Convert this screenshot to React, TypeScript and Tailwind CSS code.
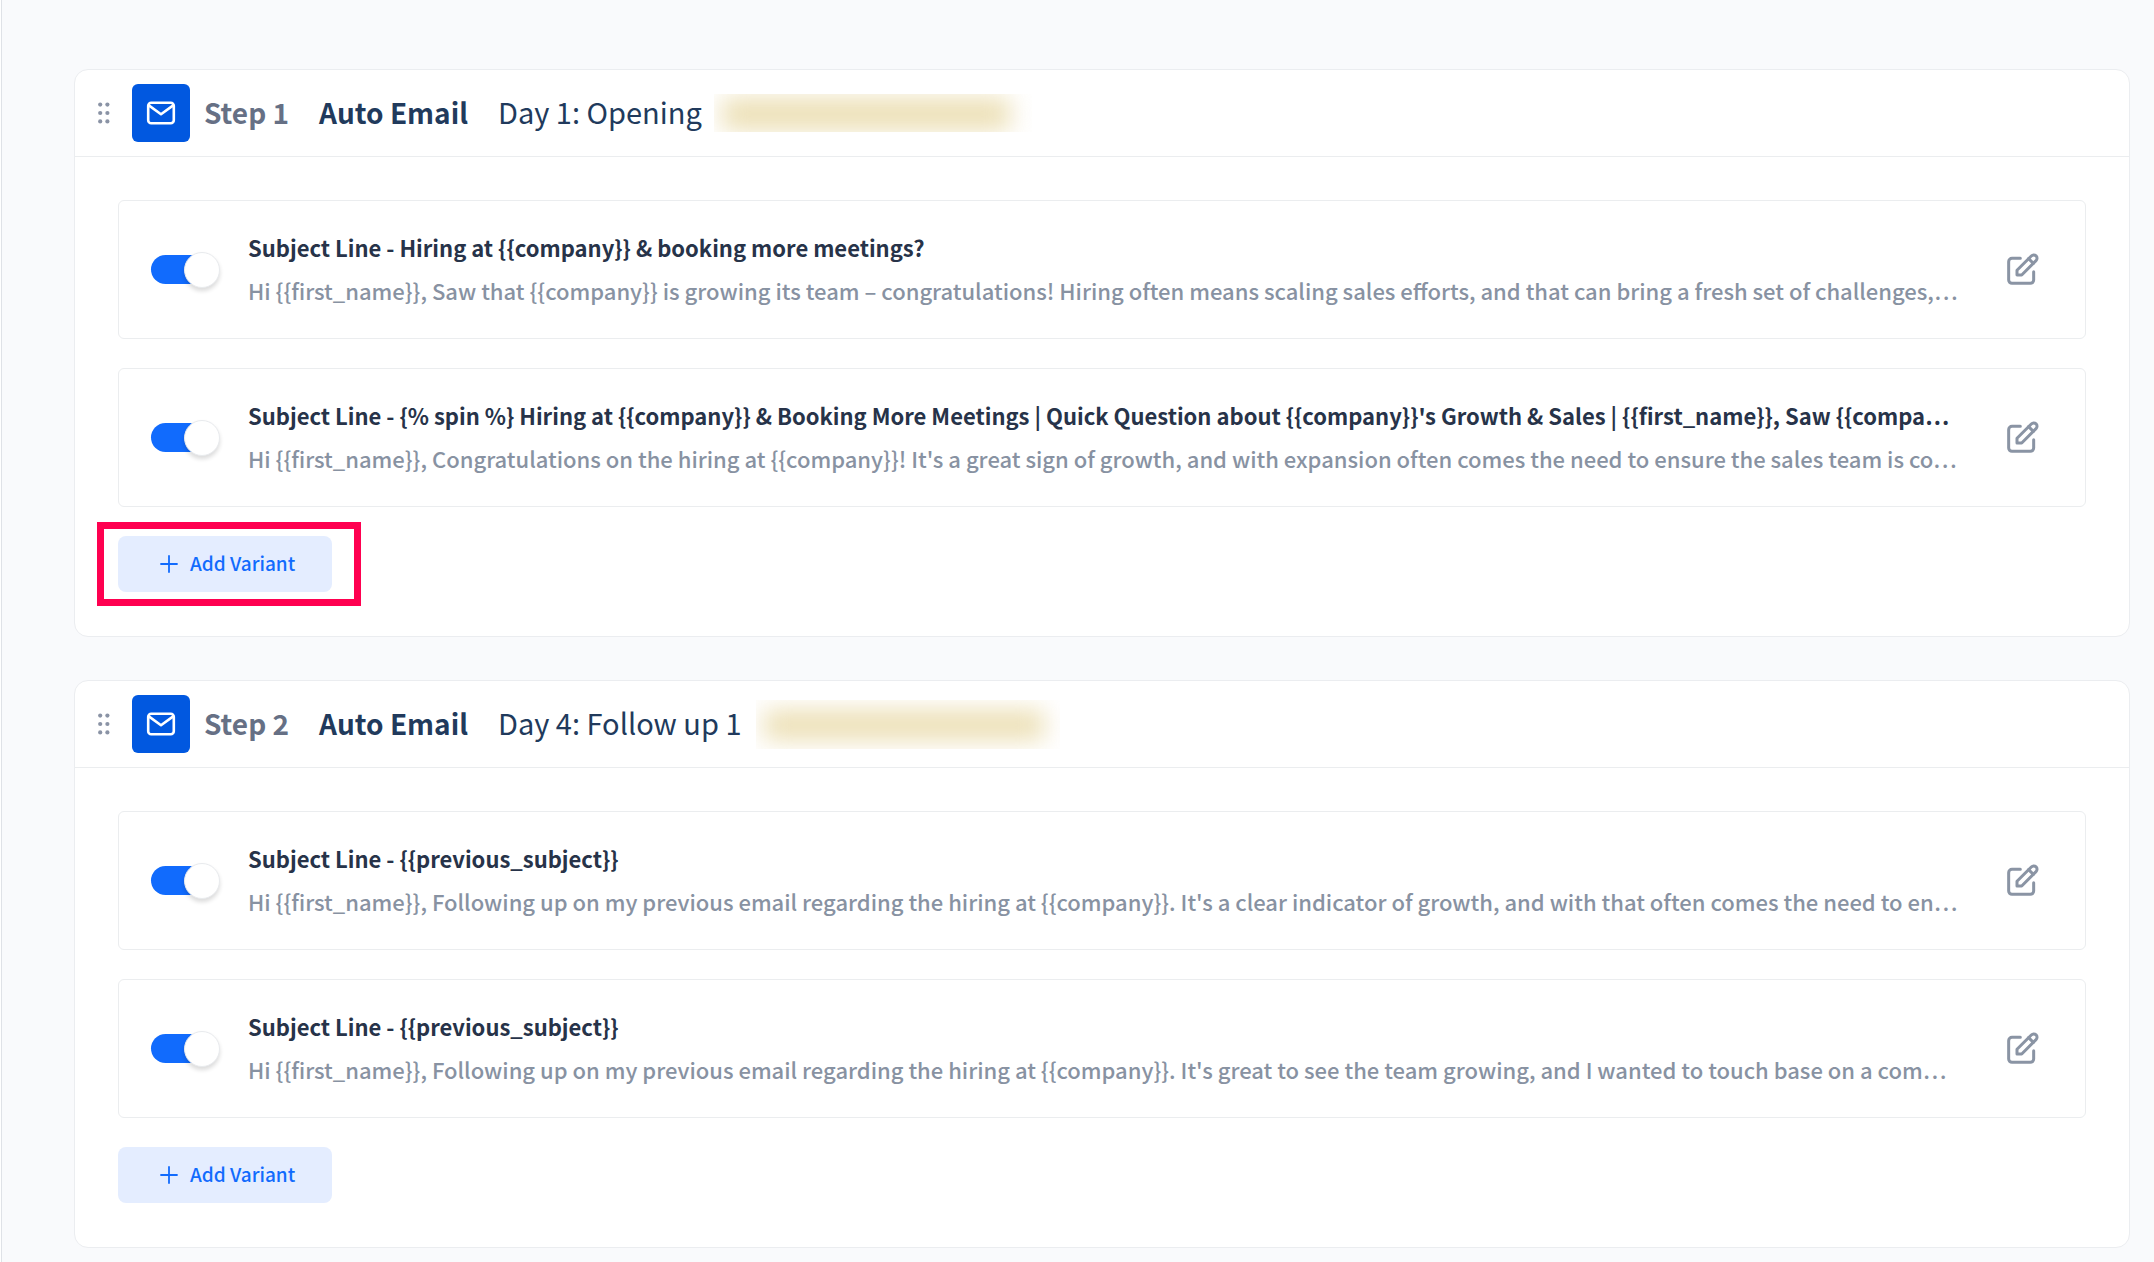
import { useId, useState } from 'react';

interface Variant {
  subject: string;
  preview: string;
}

interface Step {
  title: string;
  name: string;
  variants: Variant[];
  highlighted?: boolean;
}

const steps: Step[] = [
  {
    title: 'Step 1',
    name: 'Day 1: Opening',
    highlighted: true,
    variants: [
      {
        subject: 'Subject Line - Hiring at {{company}} & booking more meetings?',
        preview:
          'Hi {{first_name}}, Saw that {{company}} is growing its team – congratulations! Hiring often means scaling sales efforts, and that can bring a fresh set of challenges,…',
      },
      {
        subject:
          "Subject Line - {% spin %} Hiring at {{company}} & Booking More Meetings | Quick Question about {{company}}'s Growth & Sales | {{first_name}}, Saw {{compa…",
        preview:
          "Hi {{first_name}}, Congratulations on the hiring at {{company}}! It's a great sign of growth, and with expansion often comes the need to ensure the sales team is co…",
      },
    ],
  },
  {
    title: 'Step 2',
    name: 'Day 4: Follow up 1',
    variants: [
      {
        subject: 'Subject Line - {{previous_subject}}',
        preview:
          "Hi {{first_name}}, Following up on my previous email regarding the hiring at {{company}}. It's a clear indicator of growth, and with that often comes the need to en…",
      },
      {
        subject: 'Subject Line - {{previous_subject}}',
        preview:
          "Hi {{first_name}}, Following up on my previous email regarding the hiring at {{company}}. It's great to see the team growing, and I wanted to touch base on a com…",
      },
    ],
  },
];

function DragHandle() {
  return (
    <button type="button" aria-label="Drag step" className="shrink-0 text-[#8a93a5]">
      <svg viewBox="0 0 12 22" className="w-3 h-[22px]" fill="currentColor">
        {[2.6, 11, 19.4].map((y) => (
          <g key={y}>
            <circle cx="2.2" cy={y} r="2.1" />
            <circle cx="9.4" cy={y} r="2.1" />
          </g>
        ))}
      </svg>
    </button>
  );
}

function MailIcon() {
  return (
    <svg viewBox="0 0 30 24" className="w-[30px] h-6" fill="none" stroke="white" strokeWidth="2.6" strokeLinejoin="round" strokeLinecap="round">
      <rect x="2.2" y="1.7" width="25.6" height="20.6" rx="3" />
      <path d="M2.8 4.4L15 13.2L27.2 4.4" />
    </svg>
  );
}

function EditIcon() {
  return (
    <svg viewBox="0 0 24 24" className="w-10 h-10" fill="none" stroke="currentColor" strokeWidth="1.8" strokeLinecap="round" strokeLinejoin="round">
      <path d="M11 5H6a2 2 0 00-2 2v11a2 2 0 002 2h11a2 2 0 002-2v-5m-1.414-9.414a2 2 0 112.828 2.828L11.828 15H9v-2.828l8.586-8.586z" />
      <path d="M16 5.2L18.8 8" />
    </svg>
  );
}

function Toggle({ labelledBy }: { labelledBy: string }) {
  const [on, setOn] = useState(true);
  return (
    <span className="relative flex items-center w-[69px] h-9 shrink-0">
      <input
        type="checkbox"
        role="switch"
        aria-labelledby={labelledBy}
        checked={on}
        onChange={() => setOn(!on)}
        className="peer appearance-none w-16 h-[29px] rounded-full bg-gray-300 checked:bg-[#116bfd] cursor-pointer"
      />
      <span className="absolute left-0 w-9 h-9 rounded-full border border-[#e9ebee] bg-white shadow-[0_3px_4px_rgba(0,0,0,0.14)] pointer-events-none peer-checked:left-[33px]" />
    </span>
  );
}

function VariantRow({ variant }: { variant: Variant }) {
  const id = useId();
  return (
    <div className="flex items-center h-[139px] pl-8 pr-[43px] border border-[#ebedef] rounded-md">
      <Toggle labelledBy={id} />
      <div className="flex-1 min-w-0 ml-7 mr-8 pb-0.5">
        <h3 id={id} className="truncate text-[22px] leading-[43px] font-bold text-[#273349]">
          {variant.subject}
        </h3>
        <p className="truncate text-[22px] leading-[43px] font-medium text-[#8892a2]">{variant.preview}</p>
      </div>
      <button type="button" aria-label="Edit variant" className="shrink-0 text-[#8a94a4]">
        <EditIcon />
      </button>
    </div>
  );
}

function AddVariant({ highlighted }: { highlighted?: boolean }) {
  return (
    <div className="relative w-fit">
      <button type="button" className="flex items-center gap-3 w-[214px] h-14 pl-[42px] rounded-lg bg-[#e4edff] text-[#116bfd] text-[19px] leading-[26px] font-medium">
        <svg viewBox="0 0 18 18" className="w-[18px] h-[18px]" stroke="currentColor" strokeWidth="1.8" strokeLinecap="round">
          <path d="M9 1v16M1 9h16" />
        </svg>
        <span className="pb-0.5">Add Variant</span>
      </button>
      {highlighted && (
        <div className="absolute -top-[14px] -bottom-[14px] -left-[21px] -right-[29px] border-[7px] border-[#ff0050] pointer-events-none" />
      )}
    </div>
  );
}

function StepCard({ step }: { step: Step }) {
  return (
    <section className="bg-white border border-[#ebedf0] rounded-[14px]">
      <header className="flex items-center py-[14px] pl-[23px] pr-6 border-b border-[#ebedef] leading-[54px]">
        <DragHandle />
        <span className="flex items-center justify-center w-[58px] h-[58px] ml-[22px] mr-[14px] shrink-0 rounded-md bg-[#0158e0]">
          <MailIcon />
        </span>
        <h2 className="flex items-baseline h-[58px] gap-[30px] whitespace-nowrap text-[28px] text-[#213a5c]">
          <span className="font-bold text-[#667085]">{step.title}</span>
          <span className="font-bold">Auto Email</span>
          <span className="text-[29px]">{step.name}</span>
        </h2>
        {step.highlighted ? (
          <span className="w-[318px] h-[38px] ml-3 overflow-hidden">
            <span className="block w-[288px] h-8 mt-1 ml-2 bg-[#ecdfb4] blur-[12px]" />
          </span>
        ) : (
          <span className="w-[304px] h-[49px] ml-[14px] overflow-hidden">
            <span className="block w-[280px] h-[30px] mt-[10px] ml-2 bg-[#ecdfb4] blur-[12px]" />
          </span>
        )}
      </header>
      <div className="flex flex-col gap-[29px] px-[43px] pt-[43px] pb-11">
        {step.variants.map((variant, i) => (
          <VariantRow key={i} variant={variant} />
        ))}
        <AddVariant highlighted={step.highlighted} />
      </div>
    </section>
  );
}

export default function App() {
  return (
    <main className="min-h-screen flex flex-col gap-[43px] pt-[69px] pb-4 pl-[72px] pr-6 ml-px border-l border-[#dfe2e7] bg-[#f9fafc] font-['Noto_Sans_CJK_KR',sans-serif]">
      {steps.map((step) => (
        <StepCard key={step.title} step={step} />
      ))}
    </main>
  );
}
